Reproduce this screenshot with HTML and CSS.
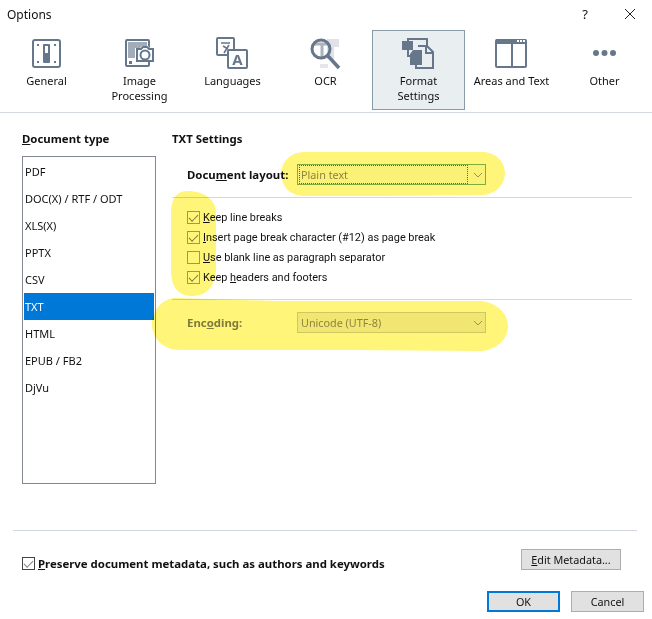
FILE: index.html
```html
<!DOCTYPE html>
<html lang="en">
<head>
  <meta charset="UTF-8">
  <title>Options</title>
  <link rel="stylesheet" href="styles.css">
</head>
<body>
  <div class="dialog">
    <!-- Title bar -->
    <div class="titlebar">
      <span class="title">Options</span>
      <span class="help">?</span>
      <svg class="close" width="12" height="12" viewBox="0 0 12 12"><path d="M1 1l10 10M11 1L1 11" stroke="#222" fill="none"/></svg>
    </div>

    <!-- Toolbar -->
    <div class="toolbar">
      <div class="tool">
        <svg class="icon" width="35" height="34" viewBox="0 0 35 34">
          <rect x="4" y="4" width="27" height="27" rx="2" fill="none" stroke="#66778c" stroke-width="2"/>
          <path d="M8 8h2v2H8zM25 8h2v2h-2zM8 25h2v2H8zM25 25h2v2h-2z" fill="#66778c"/>
          <rect x="14" y="8" width="7" height="19" rx="1" fill="#66778c"/>
          <rect x="16" y="10" width="3" height="7" fill="#fff"/>
        </svg>
        <span>General</span>
      </div>
      <div class="tool">
        <svg class="icon" width="35" height="34" viewBox="0 0 35 34">
          <rect x="4" y="4" width="23" height="26" rx="1" fill="none" stroke="#66778c" stroke-width="2"/>
          <rect x="6" y="6" width="19" height="16" fill="#a3adba"/>
          <rect x="7" y="25" width="3" height="3" fill="#66778c"/>
          <path d="M13 12h5l2-2h6l2 2h5v14H13z" fill="#fff"/>
          <path d="M15 13h4l2-2h4l2 2h4v12H15z" fill="#fff" stroke="#66778c" stroke-width="2"/>
          <circle cx="23" cy="19" r="4.5" fill="#fff" stroke="#66778c" stroke-width="2"/>
        </svg>
        <span>Image<br>Processing</span>
      </div>
      <div class="tool">
        <svg class="icon" width="35" height="34" viewBox="0 0 35 34">
          <rect x="2" y="2" width="17" height="17" rx="1" fill="none" stroke="#66778c" stroke-width="2"/>
          <path d="M6 7h9M8 10l5 3M14 9l-5 8" fill="none" stroke="#66778c" stroke-width="1.6"/>
          <rect x="13" y="14" width="19" height="18" rx="1" fill="#fff" stroke="#66778c" stroke-width="2"/>
          <text class="icon-letter" x="22.5" y="29">A</text>
        </svg>
        <span>Languages</span>
      </div>
      <div class="tool">
        <svg class="icon" width="35" height="34" viewBox="0 0 35 34">
          <path d="M19 3h12v8h-5v12h-7z" fill="#dfe2e6"/>
          <path d="M12 28h8v4h-8z" fill="#e4e6ea"/>
          <path d="M6 8h15M14 8v14" fill="none" stroke="#a9b2bd" stroke-width="3"/>
          <circle cx="13" cy="13" r="9" fill="none" stroke="#66778c" stroke-width="3"/>
          <path d="M20 20l11 12" fill="none" stroke="#66778c" stroke-width="3.5"/>
        </svg>
        <span>OCR</span>
      </div>
      <div class="tool active">
        <svg class="icon" width="35" height="34" viewBox="0 0 35 34">
          <path d="M7 12V3h19v9" fill="none" stroke="#66778c" stroke-width="2"/>
          <path d="M7 12v8h4" fill="none" stroke="#66778c" stroke-width="2"/>
          <rect x="1" y="5" width="11" height="9" fill="#66778c"/>
          <path d="M17 10h9l6 6v16H15v-6" fill="#e9eef0" stroke="#66778c" stroke-width="2"/>
          <path d="M25 10v7h7" fill="none" stroke="#66778c" stroke-width="2"/>
          <path d="M12 14h9v15H9V18z" fill="#66778c"/>
        </svg>
        <span>Format<br>Settings</span>
      </div>
      <div class="tool">
        <svg class="icon" width="35" height="34" viewBox="0 0 35 34">
          <rect x="2" y="4" width="30" height="27" rx="1" fill="none" stroke="#66778c" stroke-width="2"/>
          <rect x="2" y="3" width="30" height="5" fill="#66778c"/>
          <path d="M17 6h2v24h-2z" fill="#66778c"/>
          <path d="M23 4h2v2h-2zM26 4h2v2h-2zM29 4h2v2h-2z" fill="#fff"/>
        </svg>
        <span>Areas and Text</span>
      </div>
      <div class="tool">
        <svg class="icon" width="35" height="34" viewBox="0 0 35 34">
          <circle cx="9" cy="17" r="3" fill="#66778c"/>
          <circle cx="17.5" cy="17" r="3" fill="#66778c"/>
          <circle cx="26" cy="17" r="3" fill="#66778c"/>
        </svg>
        <span>Other</span>
      </div>
    </div>

    <!-- Main content -->
    <div class="content">
      <div class="doc-types">
        <h2><u>D</u>ocument type</h2>
        <ul class="type-list">
          <li>PDF</li>
          <li>DOC(X) / RTF / ODT</li>
          <li>XLS(X)</li>
          <li>PPTX</li>
          <li>CSV</li>
          <li class="selected">TXT</li>
          <li>HTML</li>
          <li>EPUB / FB2</li>
          <li>DjVu</li>
        </ul>
      </div>

      <div class="settings">
        <h2>TXT Settings</h2>
        <div class="field first">
          <label>Docu<u>m</u>ent layout:</label>
          <div class="select focused"><span>Plain text</span>
            <svg width="10" height="6" viewBox="0 0 10 6"><path d="M1 1l4 4 4-4" fill="none" stroke="#9a9a9a"/></svg>
          </div>
        </div>
        <div class="checks">
          <div class="check"><i class="box on"></i><span><u>K</u>eep line breaks</span></div>
          <div class="check"><i class="box on"></i><span><u>I</u>nsert page break character (#12) as page break</span></div>
          <div class="check"><i class="box"></i><span><u>U</u>se blank line as paragraph separator</span></div>
          <div class="check"><i class="box on"></i><span>Keep <u>h</u>eaders and footers</span></div>
        </div>
        <div class="field last">
          <label class="dim">Enc<u>o</u>ding:</label>
          <div class="select"><span>Unicode (UTF-8)</span>
            <svg width="10" height="6" viewBox="0 0 10 6"><path d="M1 1l4 4 4-4" fill="none" stroke="#9a9a9a"/></svg>
          </div>
        </div>
      </div>
    </div>

    <!-- Footer -->
    <div class="footer">
      <div class="meta-row">
        <div class="check meta"><i class="box on dark"></i><b><u>P</u>reserve document metadata, such as authors and keywords</b></div>
        <button class="btn edit"><u>E</u>dit Metadata...</button>
      </div>
      <div class="actions">
        <button class="btn primary">OK</button>
        <button class="btn">Cancel</button>
      </div>
    </div>

    <!-- Marker strokes drawn over the screenshot -->
    <svg class="marker" width="652" height="619" viewBox="0 0 652 619">
      <path d="M304 152h178c14 0 23 10 23 21s-9 22-23 22l-100 1h-76c-14 0-21-6-24-16-4-12 5-28 22-28z" fill="#fff578"/>
      <path d="M188 191c16 0 28 9 28 22v55c0 16-8 28-24 28s-21-12-21-26v-56c0-12 3-23 17-23z" fill="#fff578"/>
      <path d="M176 298l100 3h205c17 2 27 13 27 25s-10 24-27 25l-130 -1H180c-18 0-28-13-28-26s10-26 24-26z" fill="#fff578"/>
    </svg>
  </div>
</body>
</html>
```

FILE: styles.css
```css
/* General Styles */
body {
  margin: 0;
  background: #fff;
  color: #111;
  font-family: "Noto Sans", sans-serif;
  font-size: 11px;
}

.dialog {
  position: relative;
  width: 652px;
  height: 619px;
  overflow: hidden;
}

h2 {
  margin: 0;
  font-size: 11.4px;
  line-height: 16px;
  font-weight: 700;
}

/* Title bar */
.titlebar {
  display: flex;
  align-items: center;
  height: 28px;
  padding: 0 16px 0 7px;
}

.title {
  flex: 1;
  font-size: 12px;
}

.help {
  margin-right: 36px;
  font-size: 13px;
}

/* Toolbar */
.toolbar {
  display: flex;
  height: 82px;
  padding-top: 2px;
  border-bottom: 1px solid #d4d9e0;
}

.tool {
  display: flex;
  flex-direction: column;
  align-items: center;
  box-sizing: border-box;
  width: 93px;
  height: 80px;
  padding-top: 6px;
  line-height: 15px;
  text-align: center;
}

.tool.active {
  padding-top: 5px;
  background: #e9eef0;
  border: 1px solid #8a9ba8;
}

.icon {
  display: block;
  margin-bottom: 3px;
}

.icon-letter {
  font-size: 15px;
  font-weight: 700;
  fill: #66778c;
  text-anchor: middle;
}

/* Main content */
.content {
  display: flex;
  height: 399px;
  padding: 18px 0 0 22px;
}

.doc-types {
  width: 150px;
}

.type-list {
  box-sizing: border-box;
  width: 134px;
  height: 328px;
  margin: 9px 0 0;
  padding: 1px;
  list-style: none;
  border: 1px solid #828790;
}

.type-list li {
  height: 27px;
  padding-left: 1px;
  line-height: 27px;
}

.type-list li.selected {
  background: #0078d7;
  color: #fff;
}

.settings {
  width: 460px;
}

.field {
  display: flex;
  align-items: center;
  padding-left: 15px;
}

.field.first {
  height: 21px;
  margin-top: 17px;
  padding-bottom: 12px;
  border-bottom: 1px solid #d4d9e0;
}

.field.last {
  height: 21px;
  padding-top: 12px;
  border-top: 1px solid #d4d9e0;
}

.field label {
  width: 110px;
  font-size: 11.4px;
  font-weight: 700;
}

.field label.dim {
  color: #808080;
}

.select {
  display: flex;
  align-items: center;
  box-sizing: border-box;
  width: 189px;
  height: 21px;
  padding: 1px 2px;
  background: #f0f0f0;
  border: 1px solid #cfcfcf;
  color: #8a8a8a;
  font-size: 10.8px;
}

.select span {
  flex: 1;
  padding-left: 1px;
  line-height: 17px;
}

.select.focused {
  background: #fbfbfb;
  border-color: #7fb37f;
}

.select.focused span {
  outline: 1px dotted #666;
}

.select svg {
  margin-left: 6px;
}

.checks {
  display: flex;
  flex-direction: column;
  gap: 6px;
  padding: 12px 0 15px 15px;
  font-family: Roboto, sans-serif;
  font-size: 10.9px;
}

.check {
  display: flex;
  align-items: center;
  height: 14px;
}

.box {
  flex: none;
  position: relative;
  box-sizing: border-box;
  width: 13px;
  height: 13px;
  margin-right: 3px;
  background: #fff;
  border: 1px solid #a0a0a0;
}

.box.on::after {
  content: "";
  position: absolute;
  left: 1px;
  top: 1px;
  width: 8px;
  height: 4px;
  border-left: 1px solid #808080;
  border-bottom: 1px solid #808080;
  transform: rotate(-45deg) translate(-1px, 1px);
}

.box.dark {
  border-color: #444;
}

/* Footer */
.footer {
  margin: 0 15px 0 13px;
  border-top: 1px solid #d4d9e0;
}

.meta-row {
  display: flex;
  align-items: flex-start;
  justify-content: space-between;
  padding: 18px 16px 0 9px;
}

.meta {
  margin-top: 7px;
  font-size: 11.4px;
}

.btn {
  box-sizing: border-box;
  width: 73px;
  height: 21px;
  padding: 0;
  background: #e1e1e1;
  border: 1px solid #adadad;
  color: #111;
  font: inherit;
  font-size: 10.8px;
}

.btn.edit {
  width: 100px;
}

.btn.primary {
  border: 2px solid #0078d7;
}

.actions {
  display: flex;
  justify-content: flex-end;
  gap: 11px;
  margin-right: -7px;
  padding-top: 21px;
}

/* Marker overlay */
.marker {
  position: absolute;
  left: 0;
  top: 0;
  mix-blend-mode: multiply;
  pointer-events: none;
}
```
